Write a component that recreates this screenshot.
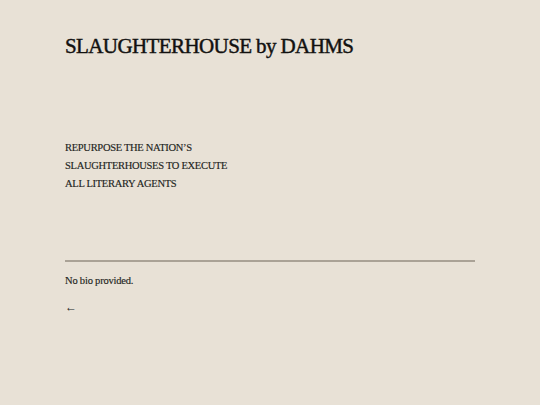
export default function App() {
  return (
    <div
      className="min-h-[405px] w-full bg-[#e8e1d6] text-[#1c1a17]"
      style={{ fontFamily: '"Liberation Serif", "DejaVu Serif", serif' }}
    >
      <div className="mx-auto w-[410px] pt-[33px]">
        <h1 className="text-[21px] leading-[26px] tracking-[-0.6px] font-normal text-[#121110] [-webkit-text-stroke:0.45px_#121110]">
          SLAUGHTERHOUSE by DAHMS
        </h1>
        <div className="mt-[80px] text-[10.5px] leading-[18px] tracking-[-0.3px] text-[#221f1c] [-webkit-text-stroke:0.15px_#221f1c]">
          <p>REPURPOSE THE NATION’S</p>
          <p>SLAUGHTERHOUSES TO EXECUTE</p>
          <p>ALL LITERARY AGENTS</p>
        </div>
        <div className="mt-[67px] h-[2px] bg-[#aaa296]" />
        <p className="mt-[10px] text-[10.5px] leading-[18px] tracking-[-0.2px] text-[#221f1c] [-webkit-text-stroke:0.15px_#221f1c]">
          No bio provided.
        </p>
        <a className="mt-[8px] block text-[12px] leading-[18px] text-[#221f1c]">←</a>
      </div>
    </div>
  );
}
